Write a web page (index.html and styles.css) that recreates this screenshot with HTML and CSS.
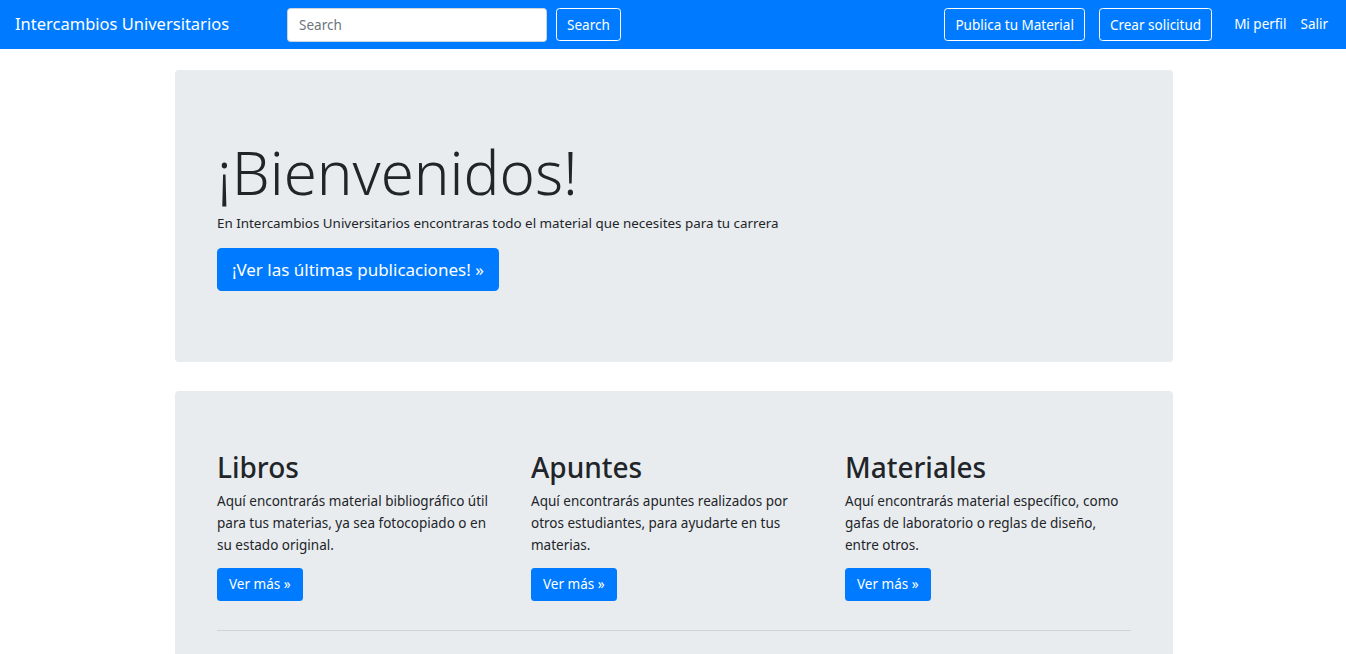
FILE: index.html
```html
<!DOCTYPE html>
<html lang="es">
<head>
<meta charset="utf-8">
<title>Intercambios Universitarios</title>
<link rel="stylesheet" href="styles.css">
</head>
<body>
<nav class="navbar">
  <a class="brand" href="#">Intercambios Universitarios</a>
  <form class="search">
    <input class="search-input" type="text" placeholder="Search">
    <button class="btn-outline" type="button">Search</button>
  </form>
  <div class="nav-right">
    <button class="btn-outline" type="button">Publica tu Material</button>
    <button class="btn-outline" type="button">Crear solicitud</button>
    <ul class="nav-links">
      <li><a href="#">Mi perfil</a></li>
      <li><a href="#">Salir</a></li>
    </ul>
  </div>
</nav>
<main class="container">
  <section class="jumbotron hero">
    <h1 class="display">¡Bienvenidos!</h1>
    <p class="intro">En Intercambios Universitarios encontraras todo el material que necesites para tu carrera</p>
    <a class="btn btn-lg" href="#">¡Ver las últimas publicaciones! »</a>
  </section>
  <section class="jumbotron cards">
    <div class="row">
      <div class="col">
        <h2>Libros</h2>
        <p>Aquí encontrarás material bibliográfico útil para tus materias, ya sea fotocopiado o en su estado original.</p>
        <p class="action"><a class="btn" href="#">Ver más »</a></p>
      </div>
      <div class="col">
        <h2>Apuntes</h2>
        <p>Aquí encontrarás apuntes realizados por otros estudiantes, para ayudarte en tus materias.</p>
        <p class="action"><a class="btn" href="#">Ver más »</a></p>
      </div>
      <div class="col">
        <h2>Materiales</h2>
        <p>Aquí encontrarás material específico, como gafas de laboratorio o reglas de diseño, entre otros.</p>
        <p class="action"><a class="btn" href="#">Ver más »</a></p>
      </div>
    </div>
    <hr class="divider">
  </section>
</main>
</body>
</html>
```
FILE: styles.css
```css
* { box-sizing: border-box; }
html, body { margin: 0; padding: 0; }
body {
  font-family: "Noto Sans", "Open Sans", sans-serif;
  font-size: 14px;
  line-height: 1.5;
  color: #212529;
  background: #fff;
}
a { text-decoration: none; }

.navbar {
  height: 49px;
  background: #007bff;
  display: flex;
  align-items: center;
  padding: 0 14px 0 15px;
}
.brand {
  color: #fff;
  font-size: 16.5px;
  margin-right: 58px;
  white-space: nowrap;
}
.search { display: flex; align-items: center; gap: 9px; }
.search-input {
  width: 260px;
  height: 34px;
  border: 1px solid #ced4da;
  border-radius: 3.5px;
  padding: 0 11px;
  font-family: inherit;
  font-size: 13.5px;
  color: #495057;
  background: #fff;
}
.search-input::placeholder { color: #6c757d; }
.btn-outline {
  height: 33px;
  background: transparent;
  color: #fff;
  border: 1px solid #fff;
  border-radius: 3.5px;
  padding: 0 10px;
  font-family: inherit;
  font-size: 13.5px;
  white-space: nowrap;
}
.nav-right { margin-left: auto; display: flex; align-items: center; gap: 14px; }
.nav-links { list-style: none; margin: 0 0 0 1px; padding: 0; display: flex; }
.nav-links a { color: #fff; padding: 7px; display: block; font-size: 13.5px; }
.nav-links li:last-child a { padding-right: 4px; }

.container { width: 998px; margin: 21px 0 0 calc(50% - 498px); }
.jumbotron {
  background: #e9ecef;
  border-radius: 4px;
  padding: 56px 42px;
  margin-bottom: 29px;
}
.hero { height: 292px; padding-top: 66px; }
.display {
  font-size: 60px;
  font-weight: 300;
  line-height: 1.2;
  margin: 0 0 5px;
}
.intro { margin: 0 0 15px; font-size: 13.4px; }
.btn {
  display: inline-block;
  background: #007bff;
  color: #fff;
  border-radius: 3.5px;
  font-size: 13.5px;
  height: 33px;
  line-height: 33px;
  padding: 0 12px;
}
.btn-lg {
  font-size: 17px;
  height: 43px;
  line-height: 43px;
  padding: 0 15px;
  border-radius: 4.5px;
}
.cards { padding-top: 60px; padding-bottom: 56px; }
.row { display: grid; grid-template-columns: repeat(3, 288px); column-gap: 26px; }
.col { padding-right: 8px; }
.col h2 { font-size: 28px; font-weight: 500; line-height: 1.2; margin: 0 0 5px; }
.col p { margin: 0 0 12px; line-height: 22px; font-size: 13.5px; }
.col p.action { line-height: 1; margin-bottom: 14px; }
.divider { border: 0; border-top: 1px solid rgba(0,0,0,.1); margin: 15px 0 0; }
```
